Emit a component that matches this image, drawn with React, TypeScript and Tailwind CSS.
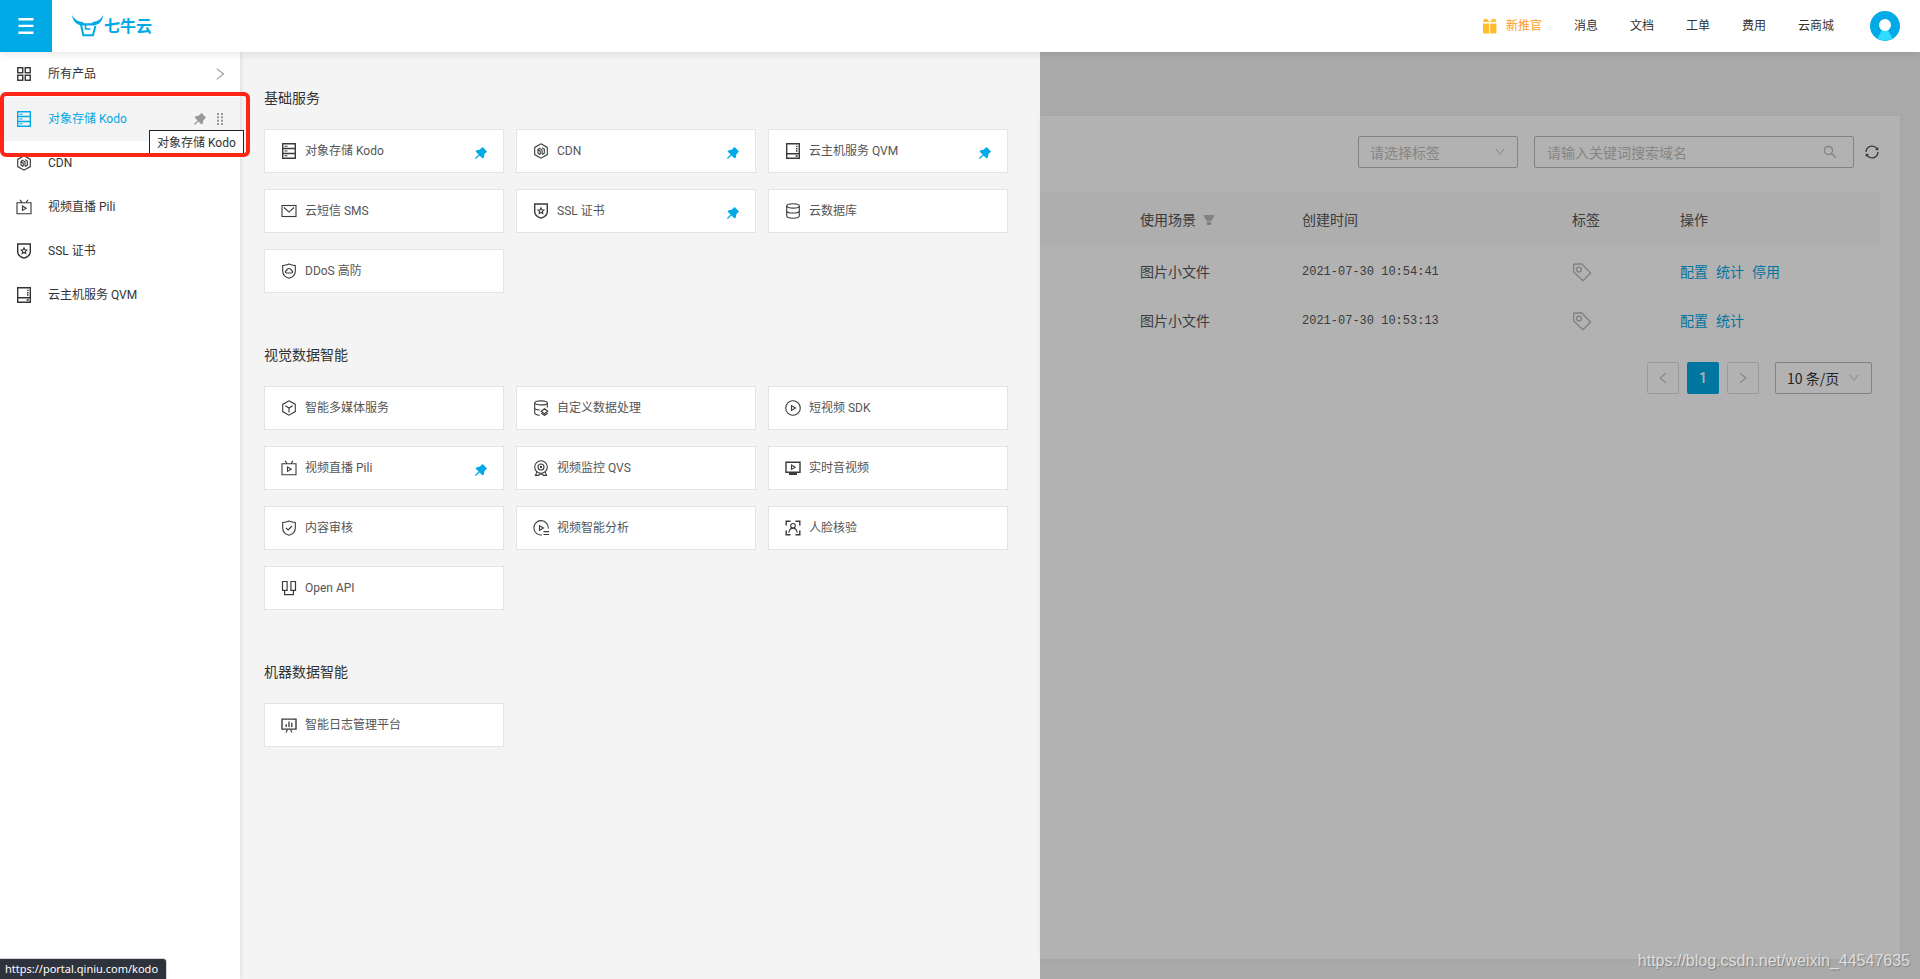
import type { ReactNode } from "react";
import {
  AiFillFilter,
  AiFillPushpin,
  AiOutlineDown,
  AiOutlineLeft,
  AiOutlineRight,
  AiOutlineSearch,
  AiOutlineSync,
} from "react-icons/ai";

type IconName =
  | "all" | "kodo" | "cdn" | "qvm" | "sms" | "ssl" | "db" | "ddos" | "media" | "dora"
  | "sdk" | "pili" | "qvs" | "rtc" | "audit" | "analysis" | "face" | "api" | "log";

const shapes: Record<IconName, ReactNode> = {
  all: (
    <g strokeWidth="1.4">
      <rect x="1.75" y="1.75" width="5" height="5" />
      <rect x="9.25" y="1.75" width="5" height="5" />
      <rect x="1.75" y="9.25" width="5" height="5" />
      <rect x="9.25" y="9.25" width="5" height="5" />
    </g>
  ),
  kodo: (
    <>
      <path d="M1.7.8h12.6v14.4H1.7zM1.7 5.5h12.6M1.7 10.5h12.6" strokeWidth="1.4" />
      <path d="M3.5 3.2h3M3.5 8h3M3.5 12.8h3" />
    </>
  ),
  cdn: (
    <>
      <path d="M8 .8l6.3 3.6v7.2L8 15.2l-6.3-3.6V4.4z" />
      <path d="M7.2 11.6L5 10.2V6.4l2.4-1.3M7.2 11.6V8L5.2 6.8M9 11.2V6.8L7.4 5.9M9 4.6l2.3 1.5v4l-2.1 1.4" />
    </>
  ),
  qvm: (
    <>
      <path d="M1.7.8h12.6v14.4H1.7zM1.7 10.7h12.6" strokeWidth="1.4" />
      <path d="M11 3.4h1.5M11 5.7h1.5M11 8h1.5M10.6 13h2.2" strokeWidth="1.4" />
    </>
  ),
  sms: (
    <>
      <rect x="1" y="2.5" width="14" height="11" />
      <path d="M3 4.5l5 4.6 5-4.6" />
    </>
  ),
  ssl: (
    <>
      <path d="M1.7 1h12.6v7.8c0 3-2.6 5.2-6.3 6.4-3.7-1.2-6.3-3.4-6.3-6.4z" strokeWidth="1.4" />
      <path d="M8 4.8l.9 1.9 2 .3-1.5 1.4.4 2.1L8 9.5l-1.8 1 .4-2.1L5.1 7l2-.3z" />
    </>
  ),
  db: (
    <>
      <ellipse cx="8" cy="2.9" rx="6.3" ry="2.2" />
      <path d="M1.7 2.9v9.9c0 1.4 2 2.4 6.3 2.4s6.3-1 6.3-2.4V2.9M1.7 7.7c0 1.4 2 2.3 6.3 2.3s6.3-.9 6.3-2.3" />
    </>
  ),
  ddos: (
    <>
      <path d="M8 1c2 1 4 1.4 6.3 1.5V8c0 3.7-2.7 6.2-6.3 7.2C4.4 14.2 1.7 11.7 1.7 8V2.5C4 2.4 6 2 8 1z" />
      <path d="M5.6 10c-1.6-.1-1.6-2.3 0-2.4.3-2.9 4.4-2.9 4.8 0 1.7.1 1.7 2.3 0 2.4z" />
    </>
  ),
  media: (
    <>
      <path d="M8 .8l6.3 3.6v7.2L8 15.2l-6.3-3.6V4.4z" />
      <path d="M4.3 5.8L8 8l3.7-2.2M8 8v4.6" />
    </>
  ),
  dora: (
    <>
      <ellipse cx="8" cy="2.9" rx="6.3" ry="2" />
      <path d="M1.7 2.9v9.9c0 1.3 2 2.3 5 2.4M14.3 2.9v4.6M1.7 8c0 1.2 2 1.9 5 2" />
      <path d="M8.2 11.2l3.3-2.5 3.3 2.5-3.3 2.5zM8.2 13.2l3.3 2.2 3.3-2.2" />
    </>
  ),
  sdk: (
    <>
      <circle cx="8" cy="8" r="7.3" />
      <path d="M6.5 5.7L10.5 8l-4 2.3z" />
    </>
  ),
  pili: (
    <>
      <path d="M1 3.8h14v10.9H1z" />
      <path d="M4 .8l2 2.8M12 .8l-2 2.8M6.5 7l3.7 2.2-3.7 2.2z" />
    </>
  ),
  qvs: (
    <>
      <circle cx="8" cy="7" r="6.3" />
      <circle cx="8" cy="7" r="3" />
      <circle cx="8" cy="7" r=".6" />
      <path d="M3.9 12l-1.5 3.4h3.2l1-1.3h2.8l1 1.3h3.2L12.1 12" />
    </>
  ),
  rtc: (
    <>
      <path d="M1 2.2h14v10H1z" strokeWidth="1.4" />
      <path d="M6.5 5l3.7 2.2-3.7 2.2z" />
      <path d="M4 14h8" strokeWidth="2" />
    </>
  ),
  audit: (
    <>
      <path d="M8 1c2 1 4 1.4 6.3 1.5V8c0 3.7-2.7 6.2-6.3 7.2C4.4 14.2 1.7 11.7 1.7 8V2.5C4 2.4 6 2 8 1z" />
      <path d="M4.9 7.8l2.3 2.1L11 6" />
    </>
  ),
  analysis: (
    <>
      <path d="M9 15A7.2 7.2 0 1 1 15.2 8.6" />
      <path d="M6.5 5.7L10.5 8l-4 2.3zM10.5 11.6H16M10.5 14.5H16" />
    </>
  ),
  face: (
    <>
      <path d="M1.2 5.5V1.2h4.3M10.5 1.2h4.3v4.3M14.8 10.5v4.3h-4.3M5.5 14.8H1.2v-4.3" strokeWidth="1.4" />
      <circle cx="8" cy="5.8" r="2.3" />
      <path d="M3.8 12.6c.5-3 2.2-4.5 4.2-4.5s3.7 1.5 4.2 4.5" />
    </>
  ),
  api: (
    <path d="M1.5 1.5h4.6v8.8H1.5zM9.9 1.5h4.6v8.8H9.9zM3.6 10.5v4.2h8.8v-4.2" strokeWidth="1.2" />
  ),
  log: (
    <>
      <path d="M1 2.1h14v10H1z" strokeWidth="1.4" />
      <path d="M5.2 7.3v2.7M8 4.6V10M10.8 5.8V10" strokeWidth="1.3" />
      <path d="M6.5 12.5l-1.5 3M9.5 12.5l1.5 3" />
    </>
  ),
};

function Icon({ name }: { name: IconName }) {
  return (
    <svg
      viewBox="0 0 16 16"
      className="size-4 shrink-0"
      fill="none"
      stroke="currentColor"
      strokeWidth="1.1"
      aria-hidden="true"
    >
      {shapes[name]}
    </svg>
  );
}

type Product = { icon: IconName; label: string; pinned?: boolean };

const sections: { title: string; items: Product[] }[] = [
  {
    title: "基础服务",
    items: [
      { icon: "kodo", label: "对象存储 Kodo", pinned: true },
      { icon: "cdn", label: "CDN", pinned: true },
      { icon: "qvm", label: "云主机服务 QVM", pinned: true },
      { icon: "sms", label: "云短信 SMS" },
      { icon: "ssl", label: "SSL 证书", pinned: true },
      { icon: "db", label: "云数据库" },
      { icon: "ddos", label: "DDoS 高防" },
    ],
  },
  {
    title: "视觉数据智能",
    items: [
      { icon: "media", label: "智能多媒体服务" },
      { icon: "dora", label: "自定义数据处理" },
      { icon: "sdk", label: "短视频 SDK" },
      { icon: "pili", label: "视频直播 Pili", pinned: true },
      { icon: "qvs", label: "视频监控 QVS" },
      { icon: "rtc", label: "实时音视频" },
      { icon: "audit", label: "内容审核" },
      { icon: "analysis", label: "视频智能分析" },
      { icon: "face", label: "人脸核验" },
      { icon: "api", label: "Open API" },
    ],
  },
  {
    title: "机器数据智能",
    items: [{ icon: "log", label: "智能日志管理平台" }],
  },
];

const pinnedItems: Product[] = [
  { icon: "cdn", label: "CDN" },
  { icon: "pili", label: "视频直播 Pili" },
  { icon: "ssl", label: "SSL 证书" },
  { icon: "qvm", label: "云主机服务 QVM" },
];

const rows = [
  { scene: "图片小文件", time: "2021-07-30 10:54:41", actions: ["配置", "统计", "停用"] },
  { scene: "图片小文件", time: "2021-07-30 10:53:13", actions: ["配置", "统计"] },
];

function TopBar() {
  return (
    <header className="relative z-20 flex h-[52px] items-center bg-white pr-5 shadow-[0_2px_8px_rgba(0,0,0,0.1)]">
      <button type="button" aria-label="菜单" className="flex size-[52px] items-center justify-center bg-[#00aae7] text-white">
        <svg viewBox="0 0 16 16" className="size-4" fill="currentColor" aria-hidden="true">
          <path d="M.5 0h15v2.4H.5zM.5 6.700h15v2.400H.5zM.5 13.500h15v2.400H.5z" />
        </svg>
      </button>
      <a href="#home" className="ml-5 flex items-center text-[#00aae7]">
        <svg viewBox="0 0 32 22" className="h-[22px] w-8" aria-hidden="true">
          <path
            d="M0 0C2.500 4.500 6 6.600 10 6.800L12 8.200H19.500L21.500 6.800C25.500 6.600 28.800 4.500 31.200 0C30.800 5 28.200 9.200 22.500 10.400H9C3.500 9.400.6 5 0 0Z"
            fill="currentColor"
          />
          <path d="M9 9.800L11.300 20.200H21L23.400 11" fill="none" stroke="currentColor" strokeWidth="2" />
          <path d="M13.500 10v4h5" fill="none" stroke="currentColor" strokeWidth="1.600" />
        </svg>
        <span className="pt-0.5 text-base leading-[22px] font-bold">七牛云</span>
      </a>
      <nav className="ml-auto flex items-center gap-8 text-xs text-[#333]">
        <a href="#promo" className="flex items-center gap-2 text-[#ff9a1f]">
          <svg viewBox="0 0 16 16" className="size-4" fill="#ffbd2e" aria-hidden="true">
            <path d="M1 5.500h6.200V15.500H2a1 1 0 0 1-1-1zM8.200 5.500H14.400v9a1 1 0 0 1-1 1H8.200zM1 4.700V3.500L2.300.8C4 .2 6 1.200 7.200 3.500L7.700 4 8.200 3.500C9.400 1.200 11.400.2 13.100.8L14.400 3.500V4.700z" />
            <path d="M0 3.900h16v1.200H0z" fill="#fff" />
          </svg>
          新推官
        </a>
        <a href="#messages">消息</a>
        <a href="#docs">文档</a>
        <a href="#tickets">工单</a>
        <a href="#billing">费用</a>
        <a href="#market">云商城</a>
        <button type="button" aria-label="账户" className="ml-1 rounded-full">
          <svg viewBox="0 0 30 30" className="size-[30px]" aria-hidden="true">
            <circle cx="15" cy="15" r="15" fill="#00aae7" />
            <path d="M12 19L7.500 27.500A15 15 0 0 0 22.500 27.500L18 19Z" fill="#2fdcff" />
            <circle cx="15" cy="14" r="6" fill="#fff" />
          </svg>
        </button>
      </nav>
    </header>
  );
}

function SideBar() {
  return (
    <nav className="relative z-10 w-60 shrink-0 bg-white text-xs text-[#333] shadow-[0_0_5px_rgba(0,0,0,0.15)]">
      <ul>
        <li className="pb-px">
          <a href="#all" className="flex h-11 items-center gap-4 pr-3 pl-4">
            <Icon name="all" />
            <span className="flex-1">所有产品</span>
            <AiOutlineRight className="size-4 text-[#aaa]" aria-hidden="true" />
          </a>
        </li>
        <li className="relative">
          <a href="#kodo" className="flex h-11 items-center gap-4 bg-[#f4f4f4] px-4 text-[#00aae7]">
            <Icon name="kodo" />
            <span className="flex-1">对象存储 Kodo</span>
            <span className="flex items-center gap-2 text-[#999]">
              <AiFillPushpin className="size-4" aria-hidden="true" />
              <svg viewBox="0 0 8 12" className="h-3 w-2" fill="#999" aria-hidden="true">
                <path d="M1 0h2v2H1zM5 0h2v2H5zM1 3.300h2v2H1zM5 3.300h2v2H5zM1 6.700h2v2H1zM5 6.700h2v2H5zM1 10h2v2H1zM5 10h2v2H5z" />
              </svg>
            </span>
          </a>
          <div
            role="tooltip"
            className="absolute top-[33px] left-[149px] border border-[#222] bg-white px-[7px] text-xs leading-6 whitespace-nowrap text-[#333]"
          >
            对象存储 Kodo
          </div>
          <div className="pointer-events-none absolute -top-[5px] left-0 h-[65px] w-[250px] rounded-md border-4 border-[#ff2517]" />
        </li>
        {pinnedItems.map((item) => (
          <li key={item.label}>
            <a href={"#" + item.icon} className="flex h-11 items-center gap-4 px-4">
              <Icon name={item.icon} />
              {item.label}
            </a>
          </li>
        ))}
      </ul>
    </nav>
  );
}

function ProductPanel() {
  return (
    <section aria-label="所有产品" className="flex w-[800px] shrink-0 flex-col gap-[51px] bg-[#f4f4f4] pt-[35px] pr-8 pb-10 pl-6">
      {sections.map((section) => (
        <div key={section.title} className="flex flex-col gap-5">
          <h2 className="text-sm leading-[22px] text-[#333]">{section.title}</h2>
          <div className="grid grid-cols-3 gap-x-3 gap-y-4">
            {section.items.map((item) => (
              <a
                key={item.label}
                href={"#" + item.icon}
                className="flex h-11 items-center gap-2 border border-[#e4e4e4] bg-white pr-3.5 pl-4 text-xs text-[#3a3a3a]"
              >
                <Icon name={item.icon} />
                <span className="flex-1 text-[#555]">{item.label}</span>
                {item.pinned && <AiFillPushpin className="mt-1 size-4 text-[#00aae7]" aria-hidden="true" />}
              </a>
            ))}
          </div>
        </div>
      ))}
    </section>
  );
}

function TagIcon() {
  return (
    <svg viewBox="0 0 20 20" className="size-5" fill="none" stroke="#bbb" strokeWidth="1.4" aria-hidden="true">
      <path d="M1.700 2.200L9.500 1.700L18.600 10.900L11 18.700L1.700 10Z" />
      <circle cx="7" cy="7.5" r="2.4" />
    </svg>
  );
}

function DomainList() {
  return (
    <main className="relative flex min-w-0 flex-1 flex-col bg-[#f4f4f4] pt-16 pr-5 pb-5">
      <div className="flex-1 bg-white py-5 pr-5 text-sm text-[#555] shadow-[0_0_6px_rgba(0,0,0,0.06)]">
        <div className="flex items-center justify-end">
          <label className="relative mr-4 flex items-center">
            <span className="sr-only">标签</span>
            <select className="h-8 w-40 appearance-none rounded-xs border border-[#bbb] bg-white px-[11px] font-['Noto_Sans_CJK_SC',sans-serif] text-sm text-[#bfbfbf]">
              <option>请选择标签</option>
            </select>
            <AiOutlineDown className="pointer-events-none absolute right-3 size-3 text-[#ccc]" aria-hidden="true" />
          </label>
          <label className="relative flex items-center">
            <span className="sr-only">搜索域名</span>
            <input
              type="text"
              placeholder="请输入关键词搜索域名"
              className="h-8 w-80 rounded-xs border border-[#bbb] bg-white px-3 font-['Noto_Sans_CJK_SC',sans-serif] text-sm placeholder:text-[#bfbfbf]"
            />
            <AiOutlineSearch className="pointer-events-none absolute right-4 size-4 text-[#bbb]" aria-hidden="true" />
          </label>
          <button type="button" aria-label="刷新" className="ml-2.5 text-[#444]">
            <AiOutlineSync className="size-4" aria-hidden="true" />
          </button>
        </div>

        <table className="mt-6 w-full table-fixed border-collapse text-left">
          <colgroup>
            <col />
            <col className="w-[162px]" />
            <col className="w-[270px]" />
            <col className="w-[108px]" />
            <col className="w-[216px]" />
          </colgroup>
          <thead>
            <tr className="h-[55px] bg-[#fafafa]">
              <td />
              <th scope="col" className="px-4 font-normal">
                <span className="flex items-center gap-1.5">
                  使用场景
                  <AiFillFilter className="size-3.5 text-[#bbb]" aria-hidden="true" />
                </span>
              </th>
              <th scope="col" className="px-4 font-normal">创建时间</th>
              <th scope="col" className="px-4 font-normal">标签</th>
              <th scope="col" className="px-4 font-normal">操作</th>
            </tr>
          </thead>
          <tbody>
            {rows.map((row) => (
              <tr key={row.time} className="h-[49px]">
                <td />
                <td className="px-4">{row.scene}</td>
                <td className="px-4 font-['Liberation_Mono',monospace] text-xs">{row.time}</td>
                <td className="px-4">
                  <button type="button" aria-label="编辑标签" className="block">
                    <TagIcon />
                  </button>
                </td>
                <td className="px-4">
                  <span className="flex gap-2 text-[#00aae7]">
                    {row.actions.map((action) => (
                      <a key={action} href="#action">{action}</a>
                    ))}
                  </span>
                </td>
              </tr>
            ))}
          </tbody>
        </table>

        <div className="mt-[17px] mr-2 flex justify-end gap-2">
          <button type="button" aria-label="上一页" className="flex size-8 items-center justify-center rounded-xs border border-[#ddd] text-[#bbb]">
            <AiOutlineLeft className="size-3.5" aria-hidden="true" />
          </button>
          <button type="button" className="size-8 rounded-xs bg-[#00aae7] text-sm font-medium text-white">1</button>
          <button type="button" aria-label="下一页" className="flex size-8 items-center justify-center rounded-xs border border-[#ddd] text-[#bbb]">
            <AiOutlineRight className="size-3.5" aria-hidden="true" />
          </button>
          <label className="relative ml-2 flex items-center">
            <span className="sr-only">每页条数</span>
            <select className="h-8 w-[97px] appearance-none rounded-xs border border-[#bbb] bg-white px-[11px] font-['Noto_Sans_CJK_SC',sans-serif] text-sm text-[#333]">
              <option>10 条/页</option>
            </select>
            <AiOutlineDown className="pointer-events-none absolute right-3 size-3 text-[#ccc]" aria-hidden="true" />
          </label>
        </div>
      </div>
      <div className="absolute inset-0 z-10 bg-black/30" />
      <p className="absolute right-[10px] bottom-1.5 z-10 font-['Liberation_Sans',sans-serif] text-base text-[#dedede] [text-shadow:1px_1px_1px_rgba(0,0,0,0.25)]">
        https://blog.csdn.net/weixin_44547635
      </p>
    </main>
  );
}

export default function App() {
  return (
    <div className="relative flex min-h-screen flex-col font-[Roboto,'Noto_Sans_CJK_SC',sans-serif]">
      <TopBar />
      <div className="flex flex-1">
        <SideBar />
        <ProductPanel />
        <DomainList />
      </div>
      <div className="absolute bottom-0 left-0 z-20 rounded-tr-sm border-t border-r border-[#d5d8dc] bg-[#2d323d] pr-2 pl-[5px] font-['Noto_Sans',sans-serif] text-[11px] leading-5 text-white">
        https://portal.qiniu.com/kodo
      </div>
    </div>
  );
}
